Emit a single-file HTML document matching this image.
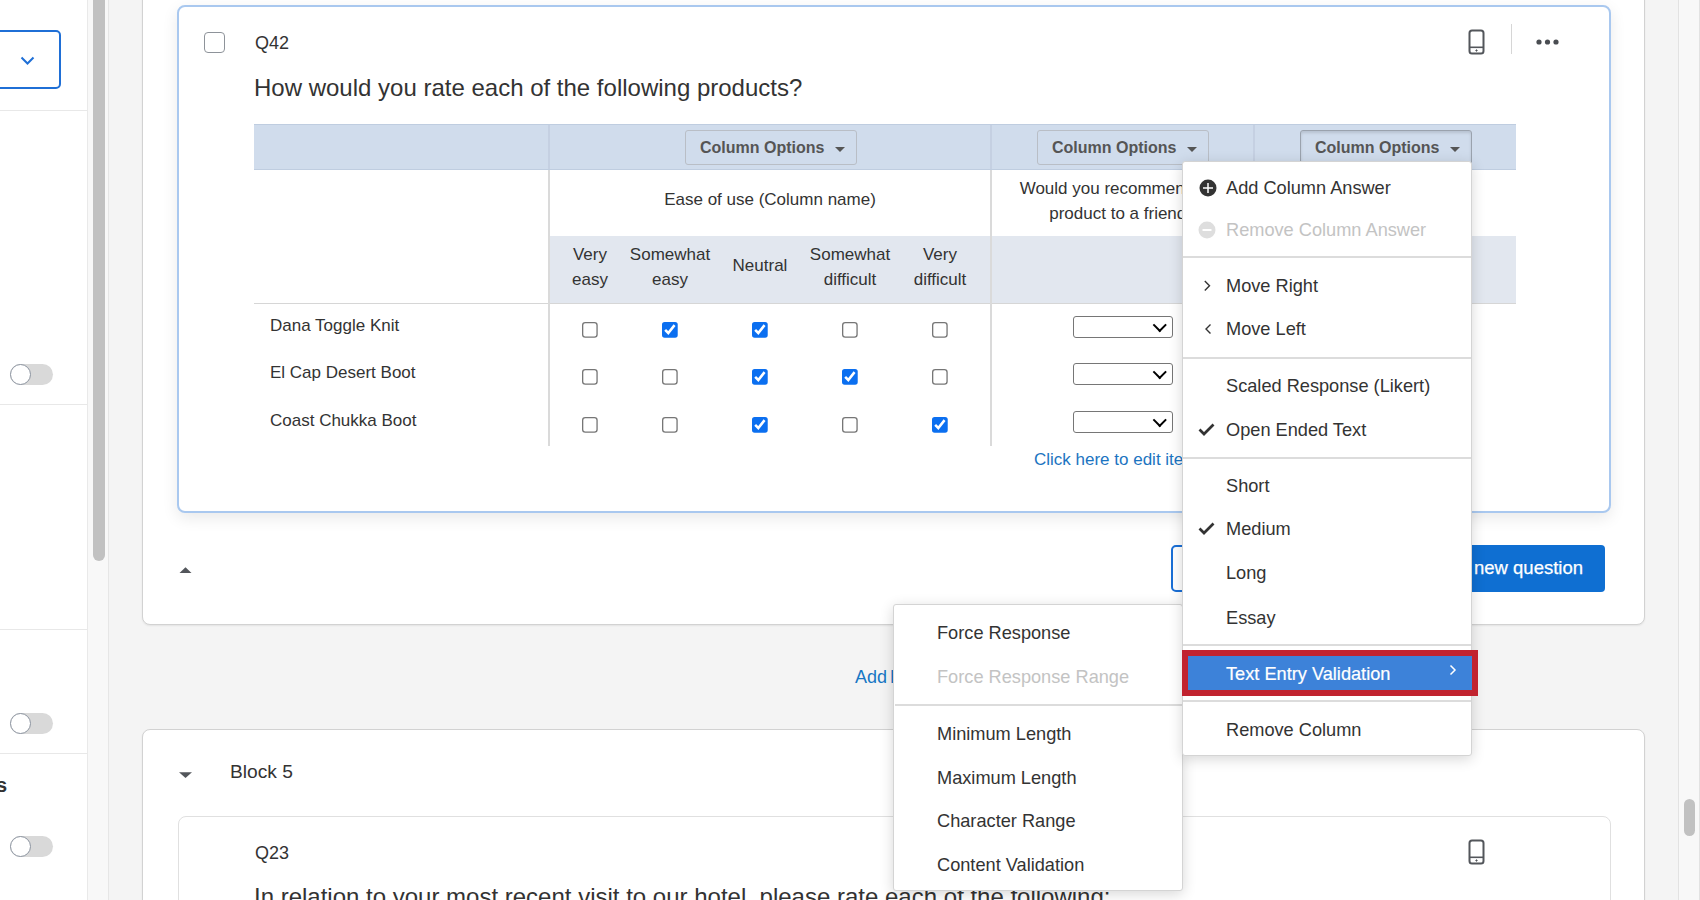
<!DOCTYPE html>
<html><head><meta charset="utf-8">
<style>
*{box-sizing:border-box;margin:0;padding:0}
html,body{width:1700px;height:900px;overflow:hidden;background:#f4f4f4;font-family:"Liberation Sans",sans-serif;color:#333}
.a{position:absolute}
.t{position:absolute;white-space:nowrap;line-height:1}
#left{left:0;top:0;width:88px;height:900px;background:#fff;border-right:1px solid #e9e9e9}
.hsep{position:absolute;left:0;width:87px;height:1px;background:#e8e8e8}
.tog{position:absolute;left:10px;width:43px;height:21px;border-radius:11px;background:#d9d9d9}
.tog:before{content:"";position:absolute;left:0;top:0;width:21px;height:21px;border-radius:50%;background:#fff;border:1.6px solid #8c94a0;box-sizing:border-box}
#ltrack{left:88px;top:0;width:21px;height:900px;background:#f8f8f8;border-right:1px solid #e6e6e6}
#lthumb{left:93px;top:-10px;width:12px;height:571px;border-radius:6px;background:#c1c1c1}
#rtrack{left:1678px;top:0;width:22px;height:900px;background:#f8f8f8;border-left:1px solid #e2e2e2;border-right:1px solid #e2e2e2}
#rthumb{left:1684px;top:799px;width:11px;height:37px;border-radius:6px;background:#c1c1c1}
.block{position:absolute;background:#fff;border:1px solid #d2d2d2;border-radius:8px;box-shadow:0 1px 2px rgba(0,0,0,.07)}
.qcard{position:absolute;background:#fff;border:2px solid #a9c8ef;border-radius:8px;box-shadow:0 5px 16px rgba(0,0,0,.09)}
.cb{position:absolute;width:20.5px;height:20.5px;border:1.8px solid #8e939a;border-radius:4px;background:#fff}
.cob{position:absolute;width:172px;height:35px;border:1px solid #b9bec6;border-radius:3px;background:#d0dcec;font-size:16px;font-weight:700;color:#555;padding:9px 0 0 14px;white-space:nowrap;line-height:1}
.cob i{position:absolute;left:149px;top:16px;width:0;height:0;border-left:5px solid transparent;border-right:5px solid transparent;border-top:5px solid #555}
.cob.act{border-color:#9aa2ad;box-shadow:inset 0 2px 3px rgba(0,0,0,.12)}
.chs{position:absolute;height:51px;display:flex;align-items:center;justify-content:center;text-align:center;font-size:17px;line-height:25px;color:#333}
.ncb{position:absolute;width:13px;height:13px;margin:0;accent-color:#0b6ff0;zoom:1.31}
.sel{position:absolute;width:100px;height:22px;border:1px solid #767676;border-radius:3px;background:#fff}
.sel:after{content:"";position:absolute;right:8px;top:3px;width:7.5px;height:7.5px;border-right:2.8px solid #000;border-bottom:2.8px solid #000;transform:rotate(45deg)}
.menu{position:absolute;background:#fff;border:1px solid #d4d4d4;border-radius:3px;box-shadow:0 3px 14px rgba(0,0,0,.16)}
.msep{position:absolute;left:1183px;width:288px;height:2px;background:#dcdcdc}
.mi{position:absolute;white-space:nowrap;line-height:1;font-size:18.2px;color:#333}
.mi.dis{color:#c3c3c3}
</style></head><body>
<!-- left panel -->
<div id="left" class="a">
  <div class="a" style="left:-10px;top:30px;width:71px;height:59px;border:2px solid #1f6fd6;border-radius:5px"></div>
  <svg class="a" style="left:20px;top:56px" width="15" height="9" viewBox="0 0 15 9"><path d="M1.5 1.5 L7.5 7.5 L13.5 1.5" fill="none" stroke="#1f6fd6" stroke-width="2"/></svg>
  <div class="hsep" style="top:110px"></div>
  <div class="tog" style="top:364px"></div>
  <div class="hsep" style="top:404px"></div>
  <div class="hsep" style="top:629px"></div>
  <div class="tog" style="top:713px"></div>
  <div class="hsep" style="top:753px"></div>
  <div class="t" style="left:-4px;top:775px;font-size:20px;font-weight:700">s</div>
  <div class="tog" style="top:836px"></div>
</div>
<div id="ltrack" class="a"></div>
<div id="lthumb" class="a"></div>
<div id="rtrack" class="a"></div>
<div id="rthumb" class="a"></div>

<!-- block 1 -->
<div class="block" style="left:142px;top:-20px;width:1503px;height:645px"></div>
<!-- question card Q42 -->
<div class="qcard" style="left:177px;top:5px;width:1434px;height:508px"></div>
<div class="cb" style="left:204px;top:32px"></div>
<div class="t" style="left:255px;top:34px;font-size:18px">Q42</div>
<div class="t" style="left:254px;top:76px;font-size:24px">How would you rate each of the following products?</div>



<!-- Q42 icons -->
<svg class="a" style="left:1468px;top:29px" width="17" height="26" viewBox="0 0 17 26"><rect x="1.5" y="1.5" width="14" height="23" rx="2.5" fill="none" stroke="#53565b" stroke-width="2"/><path d="M1.5 18.3h14" stroke="#53565b" stroke-width="1.6"/><path d="M8.5 20.4v2.2M7.4 21.5h2.2" stroke="#53565b" stroke-width="1"/></svg>
<div class="a" style="left:1511px;top:24px;width:1px;height:30px;background:#d6d6d6"></div>
<svg class="a" style="left:1535px;top:38px" width="25" height="8" viewBox="0 0 25 8"><circle cx="4" cy="4" r="2.6" fill="#4a4d52"/><circle cx="12.5" cy="4" r="2.6" fill="#4a4d52"/><circle cx="21" cy="4" r="2.6" fill="#4a4d52"/></svg>

<!-- table -->
<div class="a" style="left:254px;top:124px;width:1262px;height:46px;background:#d0dcec;border-top:1px solid #bfcde0;border-bottom:1px solid #bfcde0"></div>
<div class="a" style="left:548px;top:125px;width:2px;height:44px;background:#c5d0e2"></div>
<div class="a" style="left:990px;top:125px;width:2px;height:44px;background:#c5d0e2"></div>
<div class="a" style="left:1253px;top:125px;width:2px;height:44px;background:#c5d0e2"></div>
<div class="a" style="left:550px;top:236px;width:966px;height:67px;background:#e2e7ef"></div>
<div class="a" style="left:254px;top:303px;width:1262px;height:1px;background:#d6d6d6"></div>
<div class="a" style="left:548px;top:170px;width:2px;height:276px;background:#dadada"></div>
<div class="a" style="left:990px;top:170px;width:2px;height:276px;background:#dadada"></div>
<div class="a" style="left:1253px;top:170px;width:2px;height:133px;background:#dadada"></div>
<div class="cob" style="left:685px;top:130px">Column Options<i></i></div>
<div class="cob" style="left:1037px;top:130px">Column Options<i></i></div>
<div class="cob act" style="left:1300px;top:130px">Column Options<i></i></div>
<div class="t ct" style="left:550px;width:440px;top:191px;text-align:center;font-size:17px">Ease of use (Column name)</div>
<div class="t ct" style="left:992px;width:261px;top:175.5px;text-align:center;font-size:17px;line-height:25px;white-space:normal;padding:0 12px">Would you recommend this product to a friend?</div>
<div class="chs" style="left:550px;top:241px;width:80px"><span>Very<br>easy</span></div>
<div class="chs" style="left:630px;top:241px;width:80px"><span>Somewhat<br>easy</span></div>
<div class="chs" style="left:710px;top:240px;width:100px"><span>Neutral</span></div>
<div class="chs" style="left:810px;top:241px;width:80px"><span>Somewhat<br>difficult</span></div>
<div class="chs" style="left:890px;top:241px;width:100px"><span>Very<br>difficult</span></div>
<div class="t" style="left:270px;top:317px;font-size:17px">Dana Toggle Knit</div>
<div class="t" style="left:270px;top:364px;font-size:17px">El Cap Desert Boot</div>
<div class="t" style="left:270px;top:412px;font-size:17px">Coast Chukka Boot</div>
<input type="checkbox" class="ncb" style="left:444.27px;top:245.80px">
<input type="checkbox" class="ncb" style="left:505.34px;top:245.80px" checked>
<input type="checkbox" class="ncb" style="left:574.04px;top:245.80px" checked>
<input type="checkbox" class="ncb" style="left:642.75px;top:245.80px">
<input type="checkbox" class="ncb" style="left:711.45px;top:245.80px">
<div class="sel" style="left:1073px;top:316px"></div>
<input type="checkbox" class="ncb" style="left:444.27px;top:281.68px">
<input type="checkbox" class="ncb" style="left:505.34px;top:281.68px">
<input type="checkbox" class="ncb" style="left:574.04px;top:281.68px" checked>
<input type="checkbox" class="ncb" style="left:642.75px;top:281.68px" checked>
<input type="checkbox" class="ncb" style="left:711.45px;top:281.68px">
<div class="sel" style="left:1073px;top:363px"></div>
<input type="checkbox" class="ncb" style="left:444.27px;top:318.32px">
<input type="checkbox" class="ncb" style="left:505.34px;top:318.32px">
<input type="checkbox" class="ncb" style="left:574.04px;top:318.32px" checked>
<input type="checkbox" class="ncb" style="left:642.75px;top:318.32px">
<input type="checkbox" class="ncb" style="left:711.45px;top:318.32px" checked>
<div class="sel" style="left:1073px;top:411px"></div>
<div class="t" style="left:1034px;top:451px;font-size:17px;color:#1b74c1">Click here to edit items</div>


<!-- bottom of block 1 -->
<svg class="a" style="left:178px;top:565px" width="15" height="9" viewBox="0 0 15 9"><path d="M1.5 8 L7.5 2.2 L13.5 8Z" fill="#53565b"/></svg>
<div class="a" style="left:1171px;top:545px;width:160px;height:47px;border:2px solid #1a6fd6;border-radius:5px;background:#fff"></div>
<div class="a" style="left:1380px;top:545px;width:225px;height:47px;border-radius:4px;background:#0f6fd2"></div>
<div class="t" style="left:1474px;top:559px;font-size:18.5px;color:#fff;-webkit-text-stroke:0.25px #fff">new question</div>
<div class="t" style="left:855px;top:668px;font-size:18px;color:#1677c4;word-spacing:-2px">Add Block</div>

<div class="a" style="left:0;top:0;width:1700px;height:900px;z-index:10">
<!-- submenu -->
<div class="menu" style="left:893px;top:604px;width:290px;height:287px"></div>
<div class="a" style="left:895px;top:704px;width:287px;height:2px;background:#dcdcdc"></div>
<div class="mi" style="left:937px;top:623.6px">Force Response</div>
<div class="mi dis" style="left:937px;top:668.3px">Force Response Range</div>
<div class="mi" style="left:937px;top:724.6px">Minimum Length</div>
<div class="mi" style="left:937px;top:768.6px">Maximum Length</div>
<div class="mi" style="left:937px;top:811.6px">Character Range</div>
<div class="mi" style="left:937px;top:855.6px">Content Validation</div>

<!-- main menu -->
<div class="menu" style="left:1182px;top:161px;width:290px;height:595px"></div>
<div class="msep" style="top:256px"></div>
<div class="msep" style="top:357px"></div>
<div class="msep" style="top:457px"></div>
<div class="msep" style="top:644px"></div>
<div class="msep" style="top:700px"></div>
<svg class="a" style="left:1198.5px;top:179px" width="18" height="18" viewBox="0 0 18 18"><circle cx="9" cy="9" r="8.5" fill="#333"/><path d="M9 4v10M4 9h10" stroke="#fff" stroke-width="1.5"/></svg>
<svg class="a" style="left:1198px;top:221px" width="18" height="18" viewBox="0 0 18 18"><circle cx="9" cy="9" r="8.5" fill="#dedede"/><path d="M4.5 9h9" stroke="#fff" stroke-width="2"/></svg>
<div class="mi" style="left:1226px;top:179.3px">Add Column Answer</div>
<div class="mi dis" style="left:1226px;top:221px">Remove Column Answer</div>
<svg class="a" style="left:1202px;top:280px" width="10" height="12" viewBox="0 0 10 12"><path d="M2.8 1 L7.5 5.7 L2.8 10.4" fill="none" stroke="#333" stroke-width="1.4"/></svg>
<div class="mi" style="left:1226px;top:276.8px">Move Right</div>
<svg class="a" style="left:1202px;top:323px" width="10" height="12" viewBox="0 0 10 12"><path d="M8.5 1.5 L4 6 L8.5 10.5" fill="none" stroke="#333" stroke-width="1.4"/></svg>
<div class="mi" style="left:1226px;top:320.2px">Move Left</div>
<div class="mi" style="left:1226px;top:377.4px">Scaled Response (Likert)</div>
<svg class="a" style="left:1198px;top:422px" width="18" height="15" viewBox="0 0 18 15"><path d="M1.5 7.5 L6 12 L15.5 2.5" fill="none" stroke="#333" stroke-width="2.7"/></svg>
<div class="mi" style="left:1226px;top:420.8px">Open Ended Text</div>
<div class="mi" style="left:1226px;top:477.3px">Short</div>
<svg class="a" style="left:1198px;top:521px" width="18" height="15" viewBox="0 0 18 15"><path d="M1.5 7.5 L6 12 L15.5 2.5" fill="none" stroke="#333" stroke-width="2.7"/></svg>
<div class="mi" style="left:1226px;top:519.9px">Medium</div>
<div class="mi" style="left:1226px;top:564.4px">Long</div>
<div class="mi" style="left:1226px;top:608.8px">Essay</div>
<div class="a" style="left:1182px;top:650px;width:296px;height:46px;background:#3d82d9;border:6px solid #c1232f"></div>
<div class="mi" style="left:1226px;top:665px;color:#fff;-webkit-text-stroke:0.2px #fff">Text Entry Validation</div>
<svg class="a" style="left:1448px;top:664px" width="10" height="13" viewBox="0 0 10 13"><path d="M2.5 1.5 L7 6 L2.5 10.5" fill="none" stroke="#fff" stroke-width="1.5"/></svg>
<div class="mi" style="left:1226px;top:720.8px">Remove Column</div>
</div>

<!-- block 5 -->
<div class="block" style="left:142px;top:729px;width:1503px;height:300px"></div>
<div class="qcard" style="left:178px;top:816px;width:1433px;height:200px;border:1px solid #e0e0e0;box-shadow:none"></div>
<svg class="a" style="left:178px;top:770px" width="15" height="9" viewBox="0 0 15 9"><path d="M1 2.3 L7.5 8 L14 2.3Z" fill="#53565b"/></svg>
<svg class="a" style="left:1468px;top:839px" width="17" height="26" viewBox="0 0 17 26"><rect x="1.5" y="1.5" width="14" height="23" rx="2.5" fill="none" stroke="#53565b" stroke-width="2"/><path d="M1.5 18.3h14" stroke="#53565b" stroke-width="1.6"/><path d="M8.5 20.4v2.2M7.4 21.5h2.2" stroke="#53565b" stroke-width="1"/></svg>
<div class="t" style="left:230px;top:762px;font-size:19.2px">Block 5</div>
<div class="t" style="left:255px;top:844px;font-size:18px">Q23</div>
<div class="t" style="left:254px;top:885px;font-size:24px">In relation to your most recent visit to our hotel, please rate each of the following:</div>
</body></html>
